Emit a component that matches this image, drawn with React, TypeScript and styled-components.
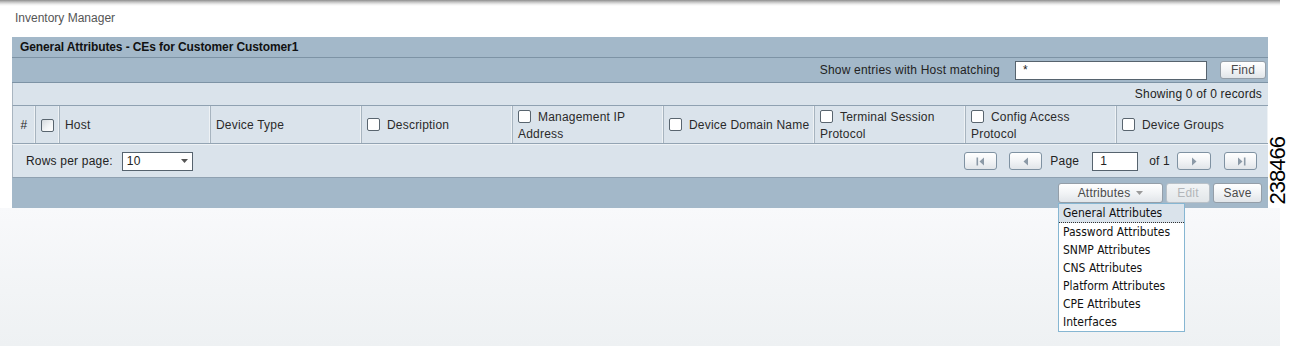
import React from "react";
import styled, { createGlobalStyle } from "styled-components";

const GlobalStyle = createGlobalStyle`
  html, body { margin: 0; padding: 0; background: #fff; }
  body {
    font-family: "Liberation Sans", Arial, sans-serif;
    font-size: 12px;
    color: #222;
  }
  * { box-sizing: border-box; }
`;

const Root = styled.div`
  position: relative;
  width: 1306px;
  height: 346px;
  overflow: hidden;
  background: #fff;
`;

const Page = styled.div`
  width: 1280px;
  height: 346px;
  display: flex;
  flex-direction: column;
`;

const TopShadow = styled.div`
  height: 6px;
  flex-shrink: 0;
  background: linear-gradient(to bottom, #8e8e8e 0%, #c4c4c4 35%, #ededed 70%, #fff 100%);
`;

const AppTitle = styled.div`
  height: 31px;
  flex-shrink: 0;
  padding: 5px 0 0 15px;
  line-height: 14px;
  font-size: 12px;
  color: #555;
`;

const Panel = styled.div`
  margin: 0 12px;
  width: 1256px;
  flex-shrink: 0;
  display: flex;
  flex-direction: column;
  letter-spacing: 0.2px;
`;

const TitleBar = styled.div`
  height: 21px;
  line-height: 20px;
  padding-left: 8px;
  background: #a3b8c9;
  border-bottom: 1px solid #7d93a5;
  font-weight: bold;
  letter-spacing: -0.1px;
  color: #111;
`;

const SearchBar = styled.div`
  height: 25px;
  display: flex;
  align-items: center;
  justify-content: flex-end;
  padding-right: 2px;
  background: #a3b8c9;
  border-bottom: 1px solid #7d93a5;
  color: #222;
`;

const SearchLabel = styled.span`
  margin-right: 15px;
`;

const TextInput = styled.div<{ $w: number }>`
  width: ${(p) => p.$w}px;
  height: 19px;
  border: 1px solid #56636e;
  background: #fff;
  padding-left: 7px;
  line-height: 17px;
  color: #222;
`;

const PlainButton = styled.button<{ $w: number; $h?: number; $disabled?: boolean }>`
  width: ${(p) => p.$w}px;
  height: ${(p) => p.$h ?? 18}px;
  padding: 0;
  border: 1px solid ${(p) => (p.$disabled ? "#b9c1c8" : "#949ea8")};
  border-radius: 3px;
  background: ${(p) =>
    p.$disabled
      ? "linear-gradient(to bottom, #f3f5f6, #e2e6e9)"
      : "linear-gradient(to bottom, #ffffff 0%, #f2f4f6 50%, #e1e5e9 100%)"};
  font-family: "Liberation Sans", Arial, sans-serif;
  font-size: 12px;
  letter-spacing: 0.2px;
  color: ${(p) => (p.$disabled ? "#b3b6b9" : "#4a4a4a")};
  display: flex;
  align-items: center;
  justify-content: center;
  gap: 6px;
  cursor: default;
`;

const FindButton = styled(PlainButton)`
  margin-left: 13px;
`;

const RecordsBar = styled.div`
  height: 23px;
  display: flex;
  align-items: center;
  justify-content: flex-end;
  padding-right: 6px;
  background: #dae3eb;
  border-bottom: 1px solid #8fa1b1;
  border-left: 1px solid #a9b5c0;
`;

const HeaderRow = styled.div`
  display: grid;
  grid-template-columns: 23px 24px repeat(7, 151px) 1fr;
  height: 38px;
  background: #dae3eb;
  border-bottom: 1px solid #93a4b3;
  border-left: 1px solid #a9b5c0;
`;

const HeadCell = styled.div<{ $center?: boolean }>`
  display: flex;
  align-items: center;
  justify-content: ${(p) => (p.$center ? "center" : "flex-start")};
  padding-left: ${(p) => (p.$center ? 0 : 5)}px;
  padding-top: 2px;
  border-right: 1px solid #a7b4bf;
  box-shadow: inset -2px 0 0 -1px #eef2f5;
  color: #2a2a2a;
  line-height: 17px;
  &:last-child { border-right: none; }
`;

const HeadText = styled.span`
  display: block;
`;

const Check = styled.span<{ $shaded?: boolean }>`
  display: inline-block;
  width: 13px;
  height: 13px;
  border: 1px solid #59656f;
  border-radius: 2px;
  background: ${(p) =>
    p.$shaded ? "linear-gradient(135deg, #d4d9dd 0%, #f4f6f7 60%, #ffffff 100%)" : "#fff"};
  vertical-align: -2px;
  margin-right: 7px;
`;

const LoneCheck = styled(Check)`
  margin-right: 0;
`;

const PagerRow = styled.div`
  height: 34px;
  display: flex;
  align-items: center;
  justify-content: space-between;
  padding: 0 11px 0 13px;
  background: #dae3eb;
  border-top: 1px solid #eef2f5;
  border-bottom: 1px solid #8fa1b1;
  border-left: 1px solid #a9b5c0;
`;

const Group = styled.div`
  display: flex;
  align-items: center;
`;

const SelectBox = styled.div`
  margin-left: 9px;
  width: 71px;
  height: 19px;
  border: 1px solid #56636e;
  background: #fff;
  display: flex;
  align-items: center;
  justify-content: space-between;
  padding: 0 4px 0 4px;
`;

const PagerText = styled.span<{ $ml: number; $mr: number }>`
  margin-left: ${(p) => p.$ml}px;
  margin-right: ${(p) => p.$mr}px;
`;

const PagerButton = styled(PlainButton)<{ $ml?: number }>`
  margin-left: ${(p) => p.$ml ?? 0}px;
  border-color: #7f92a2;
`;

const Footer = styled.div`
  height: 30px;
  display: flex;
  align-items: center;
  justify-content: flex-end;
  gap: 3px;
  padding-right: 6px;
  background: #a3b8c9;
`;

const AttrWrap = styled.div`
  position: relative;
`;

const Menu = styled.ul`
  position: absolute;
  left: 0;
  top: 20px;
  width: 127px;
  margin: 0;
  padding: 0;
  list-style: none;
  background: #fff;
  border: 1px solid #86b6d2;
  z-index: 10;
  letter-spacing: 0;
`;

const MenuItem = styled.li<{ $active?: boolean }>`
  height: ${(p) => (p.$active ? 19 : 18)}px;
  line-height: 18px;
  padding-left: 4px;
  font-family: "DejaVu Sans Condensed", "DejaVu Sans", sans-serif;
  font-stretch: condensed;
  font-size: 12px;
  color: #111;
  white-space: nowrap;
  background: ${(p) => (p.$active ? "#dae3eb" : "#fff")};
  border-bottom: ${(p) => (p.$active ? "1px dotted #333" : "none")};
`;

const Fill = styled.div`
  flex: 1;
  background: linear-gradient(to bottom, #f8f9fb 0%, #f2f4f6 60%, #eef1f3 100%);
`;

const FigureId = styled.div`
  position: absolute;
  left: 1267px;
  top: 137px;
  writing-mode: vertical-rl;
  transform: rotate(180deg);
  font-family: "Liberation Sans", Arial, sans-serif;
  font-size: 22px;
  letter-spacing: -1px;
  line-height: 22px;
  color: #000;
`;

const Tri = ({ dir, bar, color = "#8c9aa7" }: { dir: "l" | "r"; bar?: boolean; color?: string }) => (
  <svg width="10" height="9" viewBox="0 0 10 9">
    {dir === "l" ? (
      <>
        {bar && <rect x="0.5" y="0.5" width="1.6" height="8" fill={color} />}
        <polygon points={bar ? "8,0.5 3.5,4.5 8,8.5" : "7,0.5 2.5,4.5 7,8.5"} fill={color} />
      </>
    ) : (
      <>
        <polygon points={bar ? "2,0.5 6.5,4.5 2,8.5" : "3,0.5 7.5,4.5 3,8.5"} fill={color} />
        {bar && <rect x="7.9" y="0.5" width="1.6" height="8" fill={color} />}
      </>
    )}
  </svg>
);

const DownTri = ({ color, w = 7, h = 4 }: { color: string; w?: number; h?: number }) => (
  <svg width={w} height={h} viewBox={`0 0 ${w} ${h}`}>
    <polygon points={`0,0 ${w},0 ${w / 2},${h}`} fill={color} />
  </svg>
);

type Col = { label: React.ReactNode; check?: boolean; center?: boolean; shaded?: boolean };

const columns: Col[] = [
  { label: "#", center: true },
  { label: null, check: true, center: true, shaded: true },
  { label: "Host" },
  { label: "Device Type" },
  { label: "Description", check: true },
  { label: <>Management IP<br />Address</>, check: true },
  { label: "Device Domain Name", check: true },
  { label: <>Terminal Session<br />Protocol</>, check: true },
  { label: <>Config Access<br />Protocol</>, check: true },
  { label: "Device Groups", check: true },
];

const menuItems = [
  "General Attributes",
  "Password Attributes",
  "SNMP Attributes",
  "CNS Attributes",
  "Platform Attributes",
  "CPE Attributes",
  "Interfaces",
];

export default function App() {
  return (
    <Root>
      <GlobalStyle />
      <Page>
        <TopShadow />
        <AppTitle>Inventory Manager</AppTitle>
        <Panel>
          <TitleBar>General Attributes - CEs for Customer Customer1</TitleBar>
          <SearchBar>
            <SearchLabel>Show entries with Host matching</SearchLabel>
            <TextInput $w={192}>*</TextInput>
            <FindButton $w={46}>Find</FindButton>
          </SearchBar>
          <RecordsBar>Showing 0 of 0 records</RecordsBar>
          <HeaderRow>
            {columns.map((c, i) => (
              <HeadCell key={i} $center={c.center}>
                {c.label === null ? (
                  <LoneCheck $shaded={c.shaded} />
                ) : (
                  <HeadText>
                    {c.check && <Check />}
                    {c.label}
                  </HeadText>
                )}
              </HeadCell>
            ))}
          </HeaderRow>
          <PagerRow>
            <Group>
              <span>Rows per page:</span>
              <SelectBox>
                <span>10</span>
                <DownTri color="#555" />
              </SelectBox>
            </Group>
            <Group>
              <PagerButton $w={33}>
                <Tri dir="l" bar />
              </PagerButton>
              <PagerButton $w={33} $ml={12}>
                <Tri dir="l" />
              </PagerButton>
              <PagerText $ml={8} $mr={13}>Page</PagerText>
              <TextInput $w={46}>1</TextInput>
              <PagerText $ml={11} $mr={7}>of 1</PagerText>
              <PagerButton $w={34}>
                <Tri dir="r" />
              </PagerButton>
              <PagerButton $w={33} $ml={13}>
                <Tri dir="r" bar />
              </PagerButton>
            </Group>
          </PagerRow>
          <Footer>
            <AttrWrap>
              <PlainButton $w={105} $h={20}>
                Attributes <DownTri color="#9a9a9a" />
              </PlainButton>
              <Menu>
                {menuItems.map((m, i) => (
                  <MenuItem key={m} $active={i === 0}>
                    {m}
                  </MenuItem>
                ))}
              </Menu>
            </AttrWrap>
            <PlainButton $w={44} $h={20} $disabled>
              Edit
            </PlainButton>
            <PlainButton $w={49} $h={20}>
              Save
            </PlainButton>
          </Footer>
        </Panel>
        <Fill />
      </Page>
      <FigureId>238466</FigureId>
    </Root>
  );
}
